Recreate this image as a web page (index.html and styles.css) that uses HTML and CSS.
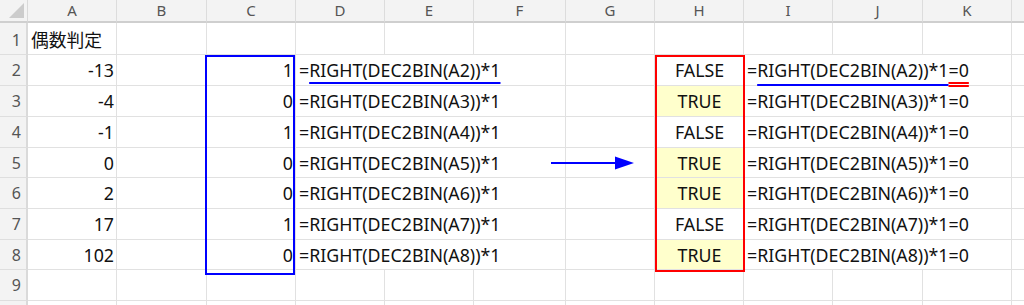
FILE: index.html
```html
<!DOCTYPE html>
<html lang="ja">
<head>
<meta charset="utf-8">
<link rel="stylesheet" href="styles.css">
</head>
<body>
<div class="sheet">
  <div class="corner"><span class="tri"></span></div>
  <div class="ch">A</div><div class="ch">B</div><div class="ch">C</div><div class="ch">D</div><div class="ch">E</div><div class="ch">F</div><div class="ch">G</div><div class="ch">H</div><div class="ch">I</div><div class="ch">J</div><div class="ch">K</div><div class="ch last"></div>

  <div class="rh r1">1</div><div class="c r1 l">偶数判定</div><div class="c r1"></div><div class="c r1"></div><div class="c r1"></div><div class="c r1"></div><div class="c r1"></div><div class="c r1"></div><div class="c r1"></div><div class="c r1"></div><div class="c r1"></div><div class="c r1"></div><div class="c r1 last"></div>

  <div class="rh">2</div><div class="c r">-13</div><div class="c"></div><div class="c r">1</div><div class="c l span3">=<span class="ub">RIGHT(DEC2BIN(A2))*1</span></div><div class="c"></div><div class="c m">FALSE</div><div class="c l span3">=<span class="ub2">RIGHT(DEC2BIN(A2))*1</span><span class="ur">=0</span></div><div class="c last"></div>

  <div class="rh">3</div><div class="c r">-4</div><div class="c"></div><div class="c r">0</div><div class="c l span3">=RIGHT(DEC2BIN(A3))*1</div><div class="c"></div><div class="c m y">TRUE</div><div class="c l span3">=RIGHT(DEC2BIN(A3))*1=0</div><div class="c last"></div>

  <div class="rh">4</div><div class="c r">-1</div><div class="c"></div><div class="c r">1</div><div class="c l span3">=RIGHT(DEC2BIN(A4))*1</div><div class="c"></div><div class="c m">FALSE</div><div class="c l span3">=RIGHT(DEC2BIN(A4))*1=0</div><div class="c last"></div>

  <div class="rh">5</div><div class="c r">0</div><div class="c"></div><div class="c r">0</div><div class="c l span3">=RIGHT(DEC2BIN(A5))*1</div><div class="c"></div><div class="c m y">TRUE</div><div class="c l span3">=RIGHT(DEC2BIN(A5))*1=0</div><div class="c last"></div>

  <div class="rh">6</div><div class="c r">2</div><div class="c"></div><div class="c r">0</div><div class="c l span3">=RIGHT(DEC2BIN(A6))*1</div><div class="c"></div><div class="c m y">TRUE</div><div class="c l span3">=RIGHT(DEC2BIN(A6))*1=0</div><div class="c last"></div>

  <div class="rh">7</div><div class="c r">17</div><div class="c"></div><div class="c r">1</div><div class="c l span3">=RIGHT(DEC2BIN(A7))*1</div><div class="c"></div><div class="c m">FALSE</div><div class="c l span3">=RIGHT(DEC2BIN(A7))*1=0</div><div class="c last"></div>

  <div class="rh">8</div><div class="c r">102</div><div class="c"></div><div class="c r">0</div><div class="c l span3">=RIGHT(DEC2BIN(A8))*1</div><div class="c"></div><div class="c m y">TRUE</div><div class="c l span3">=RIGHT(DEC2BIN(A8))*1=0</div><div class="c last"></div>

  <div class="rh">9</div><div class="c"></div><div class="c"></div><div class="c"></div><div class="c"></div><div class="c"></div><div class="c"></div><div class="c"></div><div class="c"></div><div class="c"></div><div class="c"></div><div class="c"></div><div class="c last"></div>

  <div class="rh"></div><div class="c"></div><div class="c"></div><div class="c"></div><div class="c"></div><div class="c"></div><div class="c"></div><div class="c"></div><div class="c"></div><div class="c"></div><div class="c"></div><div class="c"></div><div class="c last"></div>

  <div class="box box-blue"></div>
  <div class="box box-red"></div>
  <svg class="arrow" width="84" height="16" viewBox="0 0 84 16">
    <line x1="0" y1="8" x2="66" y2="8" stroke="#0000ff" stroke-width="2"/>
    <polygon points="64,1.5 83,8 64,14.5" fill="#0000ff"/>
  </svg>
</div>
</body>
</html>
```
FILE: styles.css
```css
html, body {
  margin: 0;
  padding: 0;
  background: #ffffff;
}
body {
  font-family: "Noto Sans", "Noto Sans CJK JP", sans-serif;
  color: #111111;
  overflow: hidden;
  height: 305px;
}
.sheet {
  position: relative;
  display: grid;
  grid-template-columns: 28px 89px 90px 89px 89px 89px 92px 89px 89px 89px 90px 89px 1fr;
  grid-template-rows: 23px 32px 31px 31px 31px 30px 31px 31px 30px 31px 10px;
  width: 1024px;
}
.corner {
  position: relative;
  background: #f3f3f3;
  border-right: 1px solid #d9d9d9;
  border-bottom: 2px solid #cfcfcf;
  box-sizing: border-box;
}
.tri {
  position: absolute;
  right: 3px;
  bottom: 3px;
  width: 0;
  height: 0;
  border-left: 15px solid transparent;
  border-bottom: 15px solid #cccccc;
}
.ch {
  background: #f3f3f3;
  border-right: 1px solid #dcdcdc;
  border-bottom: 2px solid #cfcfcf;
  box-sizing: border-box;
  color: #555555;
  font-size: 15px;
  display: flex;
  align-items: center;
  justify-content: center;
  line-height: 1;
}
.rh {
  background: #f3f3f3;
  border-right: 2px solid #dadada;
  border-bottom: 1px solid #dedede;
  box-sizing: border-box;
  color: #555555;
  font-size: 16px;
  display: flex;
  align-items: center;
  justify-content: flex-end;
  padding-right: 5px;
  line-height: 1;
}
.c {
  border-right: 1px solid #e1e1e1;
  border-bottom: 1px solid #e1e1e1;
  box-sizing: border-box;
  font-size: 17.8px;
  display: flex;
  align-items: center;
  white-space: nowrap;
  line-height: 1;
  padding: 2px 2px 0 3px;
}
.last { border-right: none; }
.r { justify-content: flex-end; }
.l { justify-content: flex-start; }
.m { justify-content: center; }
.y { background: #ffffcc; }
.span3 { grid-column: span 3; }
.r1 { padding-top: 4px; }
.rh.r1 { padding-top: 2px; }
.ub {
  text-decoration: underline;
  text-decoration-color: #0000ff;
  text-decoration-thickness: 2px;
  text-underline-offset: 5px;
}
.ub2 {
  text-decoration: underline;
  text-decoration-color: #0000ff;
  text-decoration-thickness: 2px;
  text-underline-offset: 7px;
}
.ur {
  text-decoration: underline double;
  text-decoration-color: #ff0000;
  text-decoration-thickness: 1.5px;
  text-underline-offset: 5px;
}
.box {
  position: absolute;
  box-sizing: border-box;
  pointer-events: none;
}
.box-blue {
  left: 205px;
  top: 55px;
  width: 90px;
  height: 220px;
  border: 2px solid #0000ff;
}
.box-red {
  left: 655px;
  top: 55px;
  width: 90px;
  height: 217px;
  border: 2px solid #ff0000;
}
.arrow {
  position: absolute;
  left: 551px;
  top: 155px;
}
```
